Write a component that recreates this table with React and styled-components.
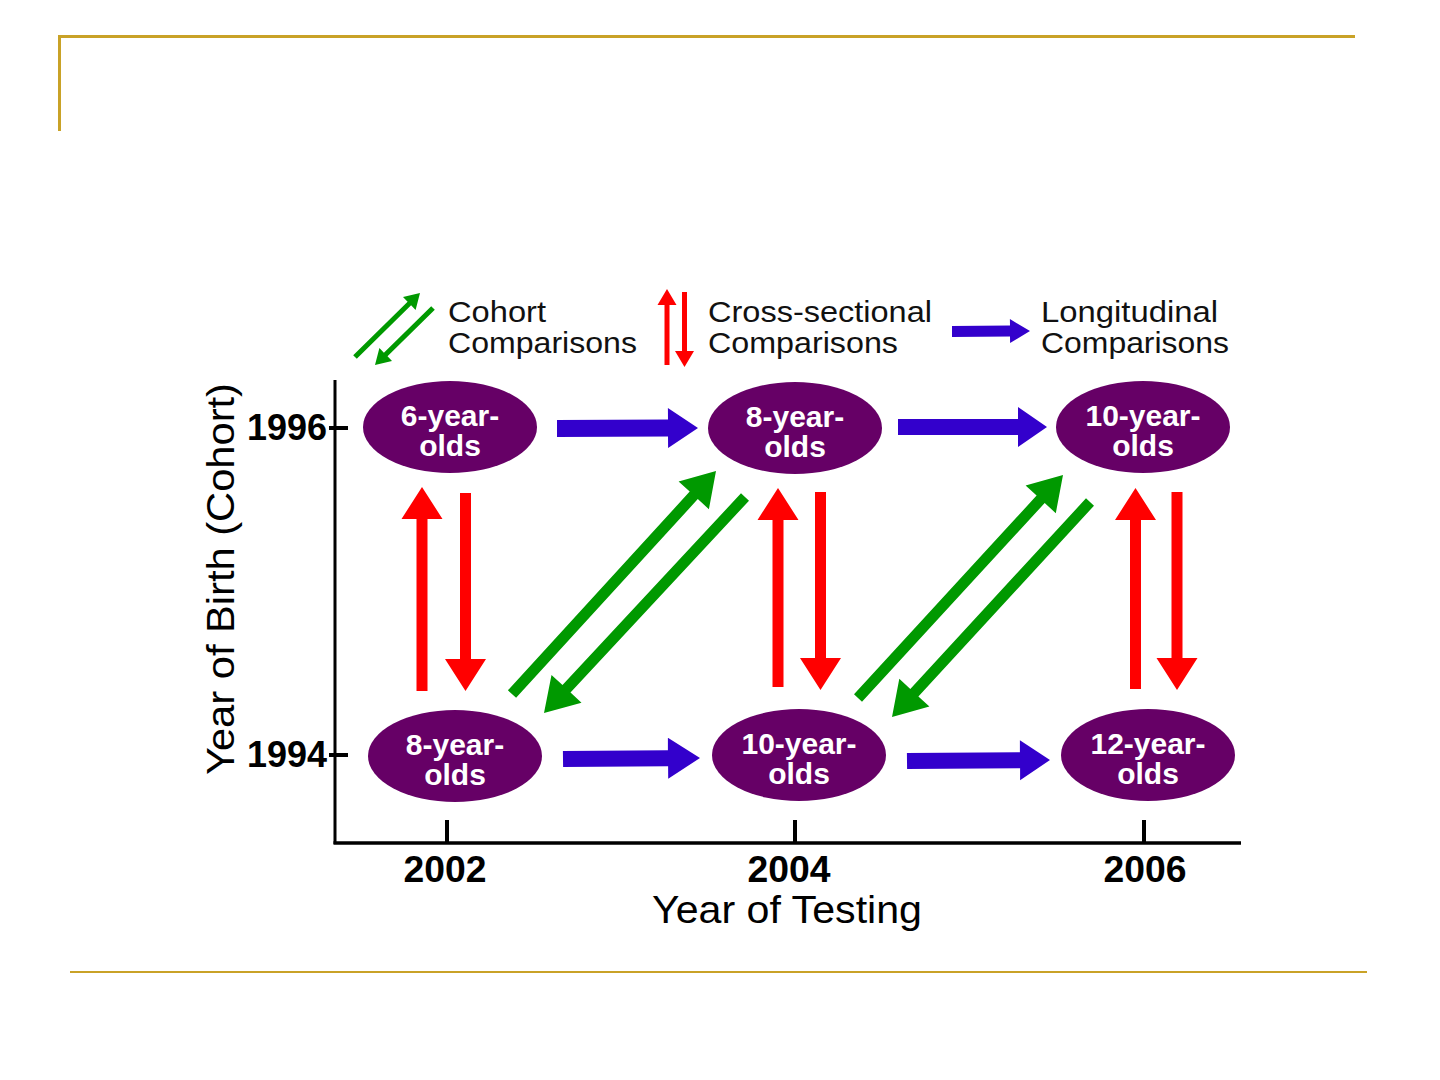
import React from 'react';
import styled, { createGlobalStyle } from 'styled-components';

const GOLD = '#c9a227';
const PURPLE = '#660066';
const COLORS = { blue: '#3300cc', red: '#ff0000', green: '#009900' };

const GlobalStyle = createGlobalStyle`
  html, body {
    margin: 0;
    padding: 0;
    background: #fff;
  }
  body {
    font-family: "Liberation Sans", Arial, sans-serif;
  }
`;

const Slide = styled.div`
  width: 1440px;
  height: 1080px;
  box-sizing: border-box;
  padding-top: 35px;
  background: #fff;
  overflow: hidden;
`;

const TitleFrame = styled.div`
  margin-left: 58px;
  width: 1297px;
  height: 96px;
  box-sizing: border-box;
  border-top: 3px solid ${GOLD};
  border-left: 3px solid ${GOLD};
`;

const Figure = styled.figure`
  margin: 149px 0 0 190px;
  width: 1060px;
  height: 660px;
`;

const Chart = styled.svg`
  display: block;
`;

const FooterRule = styled.hr`
  margin: 31px 0 0 70px;
  width: 1297px;
  height: 0;
  border: 0;
  border-top: 2px solid ${GOLD};
`;

const Arrow = styled.polygon`
  fill: ${({ $color }) => COLORS[$color]};
`;

const Node = styled.ellipse`
  fill: ${PURPLE};
`;

const NodeLabel = styled.text`
  font: bold 30px "Liberation Sans", Arial, sans-serif;
  fill: #fff;
  text-anchor: middle;
`;

const LegendText = styled.text`
  font: 30px "Liberation Sans", Arial, sans-serif;
  fill: #111;
`;

const TickLabel = styled.text`
  font: bold 36px "Liberation Sans", Arial, sans-serif;
  fill: #000;
  text-anchor: ${({ $anchor }) => $anchor || 'middle'};
`;

const AxisTitle = styled.text`
  font: 39px "Liberation Sans", Arial, sans-serif;
  fill: #000;
  text-anchor: middle;
`;

const AxisLine = styled.line`
  stroke: #000;
  stroke-width: ${({ $w }) => $w || 3};
`;

// tail -> tip polygon with a triangular head
function arrowPoints([x1, y1], [x2, y2], w, hw, hl) {
  const dx = x2 - x1;
  const dy = y2 - y1;
  const len = Math.hypot(dx, dy);
  const ux = dx / len, uy = dy / len;
  const nx = -uy, ny = ux;
  const bx = x2 - ux * hl, by = y2 - uy * hl;
  const p = (x, y) => `${x.toFixed(1)},${y.toFixed(1)}`;
  return [
    p(x1 + nx * w / 2, y1 + ny * w / 2),
    p(bx + nx * w / 2, by + ny * w / 2),
    p(bx + nx * hw / 2, by + ny * hw / 2),
    p(x2, y2),
    p(bx - nx * hw / 2, by - ny * hw / 2),
    p(bx - nx * w / 2, by - ny * w / 2),
    p(x1 - nx * w / 2, y1 - ny * w / 2),
  ].join(' ');
}

const arrows = [
  // longitudinal
  { c: 'blue', from: [557, 428.5], to: [698, 428], w: 17, hw: 40, hl: 30 },
  { c: 'blue', from: [898, 427], to: [1047, 427], w: 16, hw: 40, hl: 29 },
  { c: 'blue', from: [563, 759], to: [700, 758], w: 16, hw: 41, hl: 32 },
  { c: 'blue', from: [907, 761], to: [1050, 760], w: 16, hw: 40, hl: 30 },
  // cross-sectional
  { c: 'red', from: [422, 691], to: [422, 487], w: 11, hw: 41, hl: 32 },
  { c: 'red', from: [465.5, 493], to: [465.5, 691], w: 11, hw: 41, hl: 32 },
  { c: 'red', from: [778, 687], to: [778, 488], w: 11, hw: 41, hl: 32 },
  { c: 'red', from: [820.5, 492], to: [820.5, 690], w: 11, hw: 41, hl: 32 },
  { c: 'red', from: [1135.5, 689], to: [1135.5, 488], w: 11, hw: 41, hl: 32 },
  { c: 'red', from: [1177, 492], to: [1177, 690], w: 11, hw: 41, hl: 32 },
  // cohort
  { c: 'green', from: [512, 694], to: [716, 471], w: 11, hw: 41, hl: 33 },
  { c: 'green', from: [745, 497], to: [544, 713], w: 11, hw: 41, hl: 33 },
  { c: 'green', from: [858, 698], to: [1063, 475], w: 11, hw: 41, hl: 33 },
  { c: 'green', from: [1090, 502], to: [892, 717], w: 11, hw: 41, hl: 33 },
  // legend
  { c: 'green', from: [355, 357], to: [420, 293], w: 5, hw: 18, hl: 15 },
  { c: 'green', from: [433, 308], to: [375, 365], w: 5, hw: 18, hl: 15 },
  { c: 'red', from: [667, 365], to: [667, 289], w: 5, hw: 19, hl: 16 },
  { c: 'red', from: [684.5, 292], to: [684.5, 367], w: 5, hw: 19, hl: 16 },
  { c: 'blue', from: [952, 331.5], to: [1030, 331], w: 11, hw: 24, hl: 20 },
];

const nodes = [
  { cx: 450, cy: 427, age: 6 },
  { cx: 795, cy: 428, age: 8 },
  { cx: 1143, cy: 427, age: 10 },
  { cx: 455, cy: 756, age: 8 },
  { cx: 799, cy: 755, age: 10 },
  { cx: 1148, cy: 755, age: 12 },
];

const legend = [
  { x: 448, lines: [['Cohort', 98], ['Comparisons', 189]] },
  { x: 708, lines: [['Cross-sectional', 224], ['Comparisons', 190]] },
  { x: 1041, lines: [['Longitudinal', 177], ['Comparisons', 188]] },
];

const years = [
  { x: 445, tick: 447, label: '2002' },
  { x: 789, tick: 795, label: '2004' },
  { x: 1145, tick: 1144, label: '2006' },
];

const cohorts = [
  { y: 428, label: '1996' },
  { y: 755, label: '1994' },
];

export default function App() {
  return (
    <>
      <GlobalStyle />
      <Slide>
        <TitleFrame />
        <Figure>
          <Chart width="1060" height="660" viewBox="190 280 1060 660">
            {legend.map(({ x, lines }) =>
              lines.map(([text, len], i) => (
                <LegendText
                  key={x + text + i}
                  x={x}
                  y={322 + i * 31}
                  textLength={len}
                  lengthAdjust="spacingAndGlyphs"
                >
                  {text}
                </LegendText>
              ))
            )}

            <AxisLine x1="335" y1="380" x2="335" y2="844" />
            <AxisLine x1="333.5" y1="843" x2="1241" y2="843" $w={3.5} />
            {cohorts.map(({ y, label }) => (
              <g key={label}>
                <AxisLine x1="329" y1={y} x2="348" y2={y} $w={4} />
                <TickLabel x="327" y={y + 12} $anchor="end" textLength="80" lengthAdjust="spacingAndGlyphs">
                  {label}
                </TickLabel>
              </g>
            ))}
            {years.map(({ x, tick, label }) => (
              <g key={label}>
                <AxisLine x1={tick} y1="820" x2={tick} y2="843" $w={4} />
                <TickLabel x={x} y="882" textLength="83" lengthAdjust="spacingAndGlyphs">
                  {label}
                </TickLabel>
              </g>
            ))}
            <AxisTitle x="787" y="923" textLength="270" lengthAdjust="spacingAndGlyphs">
              Year of Testing
            </AxisTitle>
            <AxisTitle
              x="234"
              y="579"
              transform="rotate(-90 234 579)"
              textLength="392"
              lengthAdjust="spacingAndGlyphs"
            >
              Year of Birth (Cohort)
            </AxisTitle>

            {nodes.map(({ cx, cy, age }) => (
              <g key={`${cx}-${cy}`}>
                <Node cx={cx} cy={cy} rx="87" ry="46" />
                <NodeLabel x={cx} y={cy - 1}>{`${age}-year-`}</NodeLabel>
                <NodeLabel x={cx} y={cy + 29}>olds</NodeLabel>
              </g>
            ))}

            {arrows.map((a, i) => (
              <Arrow key={i} $color={a.c} points={arrowPoints(a.from, a.to, a.w, a.hw, a.hl)} />
            ))}
          </Chart>
        </Figure>
        <FooterRule />
      </Slide>
    </>
  );
}
